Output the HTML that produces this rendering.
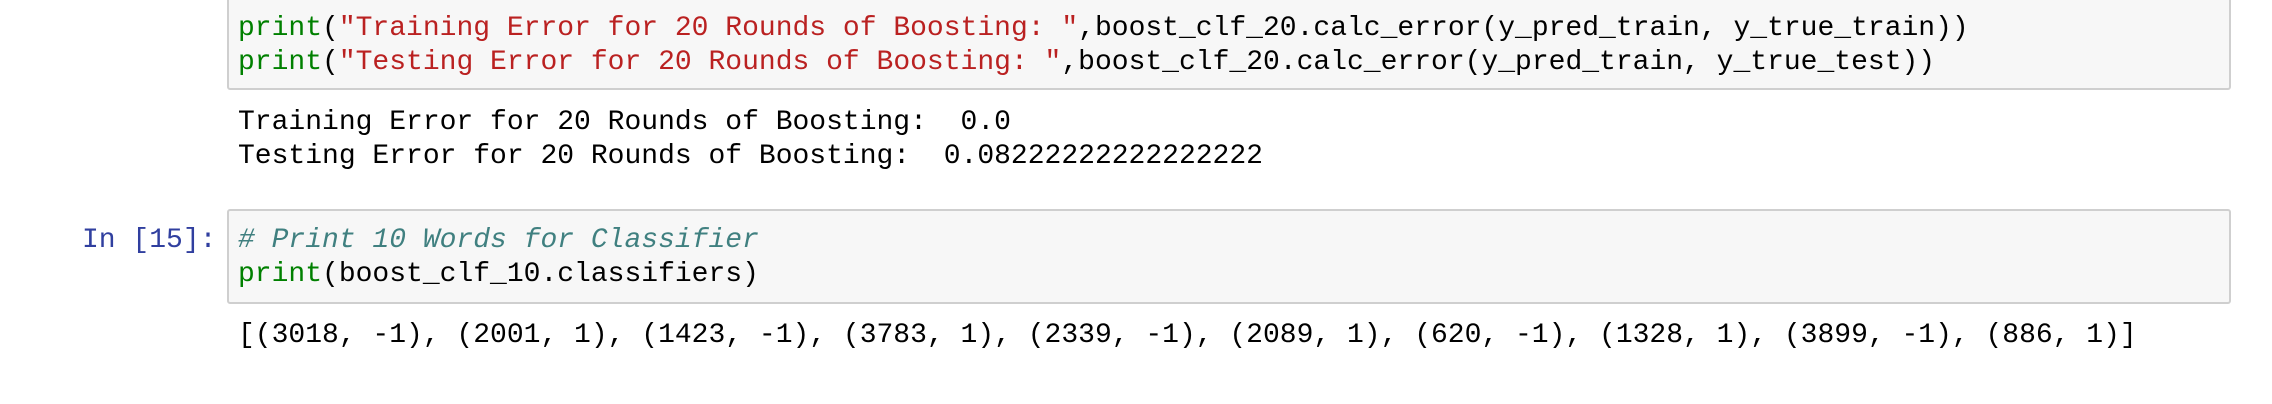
<!DOCTYPE html>
<html><head><meta charset="utf-8"><style>
html,body{margin:0;padding:0;width:2272px;height:404px;background:#fff;overflow:hidden;position:relative}
.box{position:absolute;background:#f7f7f7;border:2px solid #cfcfcf;border-radius:3px;box-sizing:border-box}
.l{position:absolute;font-family:"Liberation Mono","DejaVu Sans Mono",monospace;font-size:28px;line-height:34px;white-space:pre;color:#000}
.k{color:#008000}.s{color:#BA2121}.c{color:#408080;font-style:italic}
.p{color:#303F9F}
</style></head><body>
<div class="box" style="left:227px;top:-4px;width:2004px;height:94px"></div>
<div class="l" style="left:238px;top:12px"><span class="k">print</span>(<span class="s">"Training Error for 20 Rounds of Boosting: "</span>,boost_clf_20.calc_error(y_pred_train, y_true_train))</div>
<div class="l" style="left:238px;top:46px"><span class="k">print</span>(<span class="s">"Testing Error for 20 Rounds of Boosting: "</span>,boost_clf_20.calc_error(y_pred_train, y_true_test))</div>
<div class="l" style="left:238px;top:106px">Training Error for 20 Rounds of Boosting:  0.0</div>
<div class="l" style="left:238px;top:140px">Testing Error for 20 Rounds of Boosting:  0.08222222222222222</div>
<div class="box" style="left:227px;top:209px;width:2004px;height:95px"></div>
<div class="l p" style="left:82px;top:224px">In [15]:</div>
<div class="l" style="left:238px;top:224px"><span class="c"># Print 10 Words for Classifier</span></div>
<div class="l" style="left:238px;top:258px"><span class="k">print</span>(boost_clf_10.classifiers)</div>
<div class="l" style="left:238px;top:319px">[(3018, -1), (2001, 1), (1423, -1), (3783, 1), (2339, -1), (2089, 1), (620, -1), (1328, 1), (3899, -1), (886, 1)]</div>
</body></html>
